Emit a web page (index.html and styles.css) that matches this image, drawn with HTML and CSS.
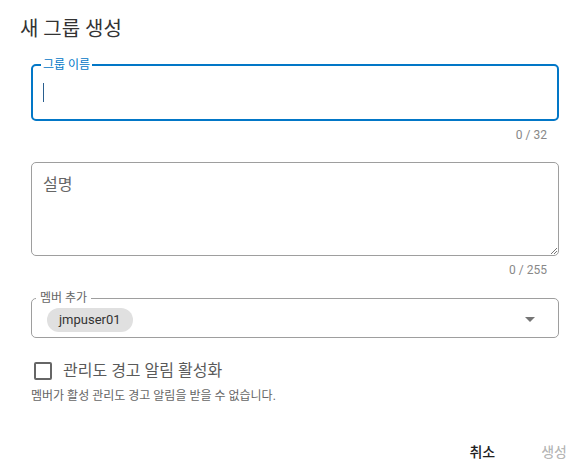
FILE: index.html
```html
<!DOCTYPE html>
<html lang="ko">
<head>
<meta charset="utf-8">
<link rel="stylesheet" href="styles.css">
</head>
<body>
<div class="dialog">
  <h2 class="title">새 그룹 생성</h2>
  <div class="content">
    <fieldset class="field field-focused field-input">
      <legend class="field-label">그룹 이름</legend>
      <div class="input-line"><span class="caret"></span></div>
    </fieldset>
    <div class="counter">0 / 32</div>

    <div class="field field-textarea">
      <div class="placeholder">설명</div>
      <svg class="resize" width="7" height="7" viewBox="0 0 7 7"><path d="M7 1 L1 7 M7 4 L4 7" stroke="#777" stroke-width="1" fill="none"/></svg>
    </div>
    <div class="counter">0 / 255</div>

    <fieldset class="field field-select">
      <legend class="field-label label-gray">멤버 추가</legend>
      <div class="select-row">
        <span class="chip">jmpuser01</span>
        <svg class="arrow" width="10" height="5" viewBox="0 0 10 5"><path d="M0 0 L10 0 L5 5 Z" fill="#757575"/></svg>
      </div>
    </fieldset>

    <label class="check-row">
      <span class="checkbox"></span>
      <span class="check-label">관리도 경고 알림 활성화</span>
    </label>
    <div class="hint">멤버가 활성 관리도 경고 알림을 받을 수 없습니다.</div>
  </div>
  <div class="actions">
    <button class="btn btn-cancel">취소</button>
    <button class="btn btn-disabled">생성</button>
  </div>
</div>
</body>
</html>
```
FILE: styles.css
```css
* { box-sizing: border-box; }
html, body { margin: 0; padding: 0; background: #fff; }
body {
  font-family: Roboto, "Noto Sans CJK KR", sans-serif;
  color: rgba(0,0,0,0.87);
  width: 588px;
  height: 467px;
  overflow: hidden;
}
.dialog {
  padding: 15px 0 0 0;
}
.title {
  margin: 0 0 0 20px;
  font-size: 20px;
  font-weight: 400;
  line-height: 28px;
  color: #333;
}
.content {
  margin: 15px 29px 0 31px;
  display: flex;
  flex-direction: column;
}
.field {
  margin: 0;
  width: 528px;
  border-radius: 5px;
}
fieldset.field {
  padding: 0 10px;
  min-inline-size: 0;
}
.field-label {
  font-size: 12px;
  line-height: 14px;
  padding: 0 2px;
  margin-left: -2px;
}
.field-focused {
  border: 2px solid #0277c7;
}
.field-focused .field-label { color: #0277c7; }
.input-line {
  height: 47px;
  display: flex;
  align-items: flex-start;
  padding-top: 11px;
}
.caret {
  display: block;
  width: 1px;
  height: 19px;
  background: #2a5f8f;
}
.counter {
  font-size: 12px;
  line-height: 16px;
  color: #888;
  text-align: right;
  padding-right: 12px;
  margin-top: 6px;
}
.field-textarea {
  margin-top: 19px;
  border: 1px solid #9e9e9e;
  height: 94px;
  padding: 12px 11px 17px;
  display: flex;
  flex-direction: column;
}
.placeholder {
  font-size: 16px;
  line-height: 20px;
  color: #666;
}
.resize {
  align-self: flex-end;
  margin-top: auto;
  margin-right: -10px;
  margin-bottom: -16px;
}
.field-select {
  margin-top: 13px;
  border: 1px solid #9e9e9e;
}
.label-gray { color: #666; margin-left: -6px; padding: 0 4px; }
.select-row {
  display: flex;
  align-items: center;
  justify-content: space-between;
  height: 32px;
  padding: 0 13px 3px 5px;
}
.chip {
  display: inline-flex;
  align-items: center;
  height: 24px;
  padding: 0 12px;
  border-radius: 12px;
  background: #e0e0e0;
  font-size: 13px;
  color: #333;
}
.check-row {
  display: flex;
  align-items: center;
  margin-top: 23px;
  margin-left: 3px;
}
.checkbox {
  width: 18px;
  height: 18px;
  border: 2px solid #666;
  border-radius: 2px;
}
.check-label {
  margin-left: 11px;
  font-size: 16px;
  line-height: 20px;
  color: #5a5a5a;
}
.hint {
  margin-top: 7px;
  font-size: 12px;
  line-height: 16px;
  color: #666;
}
.actions {
  display: flex;
  justify-content: flex-end;
  gap: 46px;
  margin-top: 38px;
  padding-right: 21px;
}
.btn {
  border: none;
  background: none;
  font-family: inherit;
  font-size: 14px;
  font-weight: 500;
  padding: 0;
  line-height: 20px;
}
.btn-cancel { color: #222; }
.btn-disabled { color: rgba(0,0,0,0.3); }
```
